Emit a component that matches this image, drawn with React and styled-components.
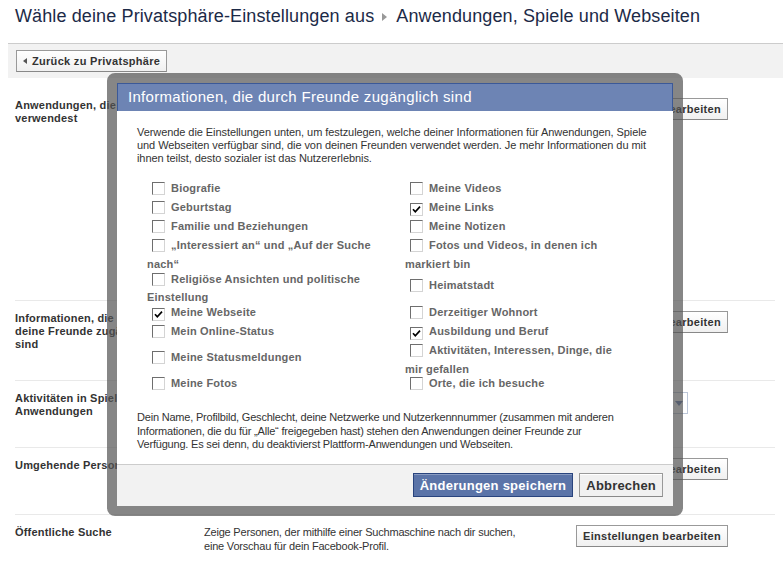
import React from 'react';
import styled, { createGlobalStyle } from 'styled-components';

const Global = createGlobalStyle`
  html, body { margin: 0; padding: 0; background: #fff; }
  body { font-family: "Liberation Sans", Arial, sans-serif; font-size: 11px; color: #333; }
`;

const Page = styled.div`
  position: relative;
  width: 783px;
  height: 565px;
  padding-left: 8px;
  box-sizing: border-box;
  overflow: hidden;
`;

const Header = styled.div`
  height: 38px;
  padding: 5px 7px 0;
  border-bottom: 1px solid #ccc;
`;

const Title = styled.h2`
  margin: 0;
  font-size: 18px;
  line-height: 22px;
  font-weight: normal;
  letter-spacing: 0.12px;
  color: #1c2a47;
  white-space: nowrap;
  display: flex;
  align-items: center;
`;

const Crumb = styled.span`
  display: inline-block;
  width: 0;
  height: 0;
  border-left: 5px solid #999;
  border-top: 4px solid transparent;
  border-bottom: 4px solid transparent;
  margin: 1px 9px 0 8px;
`;

const Band = styled.div`
  height: 34px;
  background: #f2f2f2;
  padding: 6px 8px 0;
  box-sizing: border-box;
`;

const GrayButton = styled.button`
  height: 22px;
  box-sizing: border-box;
  border: 1px solid #999;
  border-bottom-color: #888;
  background: linear-gradient(#fff, #f0f0f0);
  font-family: inherit;
  font-size: 11px;
  font-weight: bold;
  letter-spacing: 0.3px;
  color: #333;
  padding: 0 6px;
  display: inline-flex;
  align-items: center;
  white-space: nowrap;
  cursor: pointer;
`;

const BackArrow = styled.span`
  display: inline-block;
  width: 0;
  height: 0;
  border-right: 4px solid #555;
  border-top: 3.5px solid transparent;
  border-bottom: 3.5px solid transparent;
  margin-right: 5px;
`;

const Rows = styled.div`
  margin: 0 8px 0 7px;
`;

const Row = styled.div`
  display: grid;
  grid-template-columns: 189px 372px auto;
  align-items: start;
  height: ${p => p.$h}px;
  box-sizing: border-box;
  padding-top: ${p => p.$pt || 10}px;
  border-bottom: ${p => (p.$last ? 'none' : '1px solid #e9e9e9')};
`;

const RowLabel = styled.div`
  font-weight: bold;
  font-size: 11px;
  line-height: 13px;
  letter-spacing: 0.2px;
  color: #333;
  white-space: nowrap;
  padding-top: 1px;
`;

const RowDesc = styled.div`
  font-size: 11px;
  line-height: 14px;
  letter-spacing: -0.2px;
  color: #333;
  white-space: nowrap;
`;

const Select = styled.div`
  width: 112px;
  height: 22px;
  box-sizing: border-box;
  border: 1px solid #bdc7d8;
  background: #fff;
  display: flex;
  align-items: center;
  justify-content: space-between;
  padding: 0 4px;
  margin-top: 1px;
  color: #333;
`;

const SelectArrow = styled.span`
  width: 0;
  height: 0;
  border-top: 5px solid #627aad;
  border-left: 4px solid transparent;
  border-right: 4px solid transparent;
`;

const Overlay = styled.div`
  position: absolute;
  left: 107px;
  top: 73px;
  width: 556px;
  border: 10px solid rgba(82, 82, 82, 0.7);
  border-radius: 8px;
`;

const Dialog = styled.div`
  background: #fff;
`;

const DialogTitle = styled.div`
  height: 28px;
  box-sizing: border-box;
  background: #6d84b4;
  border: 1px solid #3b5998;
  border-bottom: none;
  color: #fff;
  font-size: 15px;
  letter-spacing: 0.3px;
  line-height: 26px;
  padding-left: 10px;
  white-space: nowrap;
`;

const DialogBody = styled.div`
  height: 353px;
  box-sizing: border-box;
  padding: 15px 20px 0;
`;

const Para = styled.p`
  margin: ${p => p.$mt || 0}px 0 0;
  font-size: 11px;
  line-height: ${p => p.$lh || 13}px;
  letter-spacing: ${p => p.$ls ?? -0.2}px;
  white-space: nowrap;
  color: #333;
`;

const Grid = styled.div`
  display: grid;
  grid-template-columns: 258px 258px;
  margin: 14px 0 0 10px;
`;

const Column = styled.div`
  display: flex;
  flex-direction: column;
`;

const Item = styled.div`
  height: ${p => p.$h}px;
  line-height: ${p => p.$lh || 19}px;
  font-size: 11px;
  font-weight: bold;
  letter-spacing: 0.2px;
  color: #666;
  white-space: nowrap;
`;

const Box = styled.span`
  display: inline-flex;
  align-items: center;
  justify-content: center;
  width: 13px;
  height: 13px;
  box-sizing: border-box;
  border: 1px solid;
  border-color: #6e6e6e #d4d4d4 #d4d4d4 #6e6e6e;
  background: #fff;
  vertical-align: -3px;
  margin: 0 6px 0 5px;
`;

const Footer = styled.div`
  height: 42px;
  box-sizing: border-box;
  background: #f2f2f2;
  border-top: 1px solid #ccc;
  padding: 8px 10px 0;
  display: flex;
  justify-content: flex-end;
  gap: 6px;
`;

const DialogButton = styled.button`
  height: 24px;
  box-sizing: border-box;
  padding: 0 6px;
  font-family: inherit;
  font-size: 13px;
  font-weight: bold;
  letter-spacing: ${p => (p.$primary ? '0.25px' : '0.2px')};
  white-space: nowrap;
  cursor: pointer;
  border: 1px solid ${p => (p.$primary ? '#29447e' : '#999')};
  border-bottom-color: ${p => (p.$primary ? '#29447e' : '#888')};
  background: ${p => (p.$primary ? '#5b74a8' : '#f0f0f0')};
  color: ${p => (p.$primary ? '#fff' : '#333')};
  box-shadow: ${p => (p.$primary ? 'inset 0 1px 0 #8a9cc2' : 'inset 0 1px 0 #fff')};
`;

const Checkbox = ({ checked }) => (
  <Box>
    {checked && (
      <svg width="9" height="9" viewBox="0 0 9 9">
        <path d="M1 4.2 L3.3 6.8 L8 1.6" stroke="#000" strokeWidth="1.7" fill="none" />
      </svg>
    )}
  </Box>
);

const leftItems = [
  { t: ['Biografie'], h: 19 },
  { t: ['Geburtstag'], h: 19 },
  { t: ['Familie und Beziehungen'], h: 19 },
  { t: ['„Interessiert an“ und „Auf der Suche', 'nach“'], h: 34, lh: 19 },
  { t: ['Religiöse Ansichten und politische', 'Einstellung'], h: 33, lh: 18 },
  { t: ['Meine Webseite'], h: 19, c: true },
  { t: ['Mein Online-Status'], h: 26 },
  { t: ['Meine Statusmeldungen'], h: 26 },
  { t: ['Meine Fotos'], h: 19 },
];

const rightItems = [
  { t: ['Meine Videos'], h: 19 },
  { t: ['Meine Links'], h: 19, c: true },
  { t: ['Meine Notizen'], h: 19 },
  { t: ['Fotos und Videos, in denen ich', 'markiert bin'], h: 40, lh: 19 },
  { t: ['Heimatstadt'], h: 27 },
  { t: ['Derzeitiger Wohnort'], h: 19 },
  { t: ['Ausbildung und Beruf'], h: 19, c: true },
  { t: ['Aktivitäten, Interessen, Dinge, die', 'mir gefallen'], h: 33, lh: 19 },
  { t: ['Orte, die ich besuche'], h: 19 },
];

const renderItems = items =>
  items.map((it, i) => (
    <Item key={i} $h={it.h} $lh={it.lh}>
      <Checkbox checked={it.c} />
      {it.t[0]}
      {it.t[1] && (
        <>
          <br />
          {it.t[1]}
        </>
      )}
    </Item>
  ));

const Lines = ({ lines }) =>
  lines.map((l, i) => (
    <React.Fragment key={i}>
      {i > 0 && <br />}
      {l}
    </React.Fragment>
  ));

export default function App() {
  return (
    <>
      <Global />
      <Page>
        <Header>
          <Title>
            Wähle deine Privatsphäre-Einstellungen aus
            <Crumb />
            Anwendungen, Spiele und Webseiten
          </Title>
        </Header>
        <Band>
          <GrayButton>
            <BackArrow />
            Zurück zu Privatsphäre
          </GrayButton>
        </Band>
        <Rows>
          <Row $h={223} $pt={20}>
            <RowLabel>
              <Lines lines={['Anwendungen, die du', 'verwendest']} />
            </RowLabel>
            <RowDesc />
            <div>
              <GrayButton>Einstellungen bearbeiten</GrayButton>
            </div>
          </Row>
          <Row $h={80}>
            <RowLabel>
              <Lines lines={['Informationen, die durch', 'deine Freunde zugänglich', 'sind']} />
            </RowLabel>
            <RowDesc />
            <div>
              <GrayButton>Einstellungen bearbeiten</GrayButton>
            </div>
          </Row>
          <Row $h={67}>
            <RowLabel>
              <Lines lines={['Aktivitäten in Spielen und', 'Anwendungen']} />
            </RowLabel>
            <RowDesc />
            <Select>
              <span>Nur Freunde</span>
              <SelectArrow />
            </Select>
          </Row>
          <Row $h={67}>
            <RowLabel>Umgehende Personalisierung</RowLabel>
            <RowDesc />
            <div>
              <GrayButton>Einstellungen bearbeiten</GrayButton>
            </div>
          </Row>
          <Row $h={50} $last>
            <RowLabel>Öffentliche Suche</RowLabel>
            <RowDesc>
              <Lines
                lines={[
                  'Zeige Personen, der mithilfe einer Suchmaschine nach dir suchen,',
                  'eine Vorschau für dein Facebook-Profil.',
                ]}
              />
            </RowDesc>
            <div>
              <GrayButton>Einstellungen bearbeiten</GrayButton>
            </div>
          </Row>
        </Rows>

        <Overlay>
          <Dialog>
            <DialogTitle>Informationen, die durch Freunde zugänglich sind</DialogTitle>
            <DialogBody>
              <Para $ls={-0.07}>
                <Lines
                  lines={[
                    'Verwende die Einstellungen unten, um festzulegen, welche deiner Informationen für Anwendungen, Spiele',
                    'und Webseiten verfügbar sind, die von deinen Freunden verwendet werden. Je mehr Informationen du mit',
                    'ihnen teilst, desto sozialer ist das Nutzererlebnis.',
                  ]}
                />
              </Para>
              <Grid>
                <Column>{renderItems(leftItems)}</Column>
                <Column>{renderItems(rightItems)}</Column>
              </Grid>
              <Para $mt={18} $lh={13.5}>
                <Lines
                  lines={[
                    'Dein Name, Profilbild, Geschlecht, deine Netzwerke und Nutzerkennnummer (zusammen mit anderen',
                    'Informationen, die du für „Alle“ freigegeben hast) stehen den Anwendungen deiner Freunde zur',
                    'Verfügung. Es sei denn, du deaktivierst Plattform-Anwendungen und Webseiten.',
                  ]}
                />
              </Para>
            </DialogBody>
            <Footer>
              <DialogButton $primary>Änderungen speichern</DialogButton>
              <DialogButton>Abbrechen</DialogButton>
            </Footer>
          </Dialog>
        </Overlay>
      </Page>
    </>
  );
}
